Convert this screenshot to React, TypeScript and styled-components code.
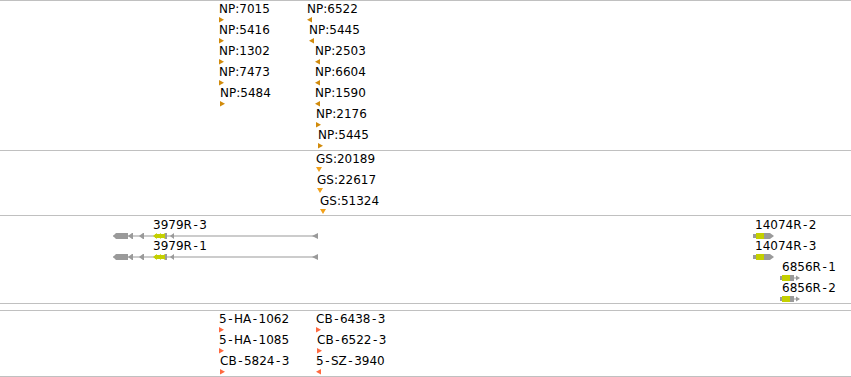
import React from 'react';
import styled, { createGlobalStyle } from 'styled-components';

const GlobalStyle = createGlobalStyle`
    html, body {
        margin: 0;
        padding: 0;
        background: #ffffff;
    }
    body {
        font-family: 'DejaVu Sans', Verdana, sans-serif;
        font-size: 12px;
        color: #000000;
    }
`;

const Browser = styled.div`
    width: 851px;
    display: flex;
    flex-direction: column;
    overflow: hidden;
`;

const Track = styled.div<{ $height: number; $last?: boolean; $pad?: number }>`
    box-sizing: border-box;
    height: ${p => p.$height}px;
    padding-top: ${p => p.$pad ?? 0}px;
    border-top: 1px solid #c0c0c0;
    border-bottom: ${p => (p.$last ? '1px solid #c0c0c0' : 'none')};
    display: flex;
    flex-direction: column;
`;

// one horizontal lane of features; x positions inside come from the data
const Lane = styled.div`
    position: relative;
    height: 21px;
    flex: none;
`;

const FeatureBox = styled.div`
    position: absolute;
    top: 0;
    display: flex;
    flex-direction: column;
    align-items: flex-start;
    gap: 1px;
`;

const Label = styled.span`
    display: block;
    height: 14px;
    line-height: 14px;
    white-space: nowrap;
`;

// the viewer draws its hyphens wider than DejaVu does
const Dash = styled.span`
    padding: 0 1.5px;
`;

const LabelText: React.FC<{ text: string }> = ({ text }) => {
    const parts = text.split('-');
    return (
        <>
            {parts.map((p, i) => (
                <React.Fragment key={i}>
                    {i > 0 && <Dash>-</Dash>}
                    {p}
                </React.Fragment>
            ))}
        </>
    );
};

const Marker = styled.svg`
    display: block;
`;

type Dir = 'right' | 'left' | 'down';

const trianglePoints: Record<Dir, string> = {
    right: '0,0 5,2.75 0,5.5',
    left: '5,0 0,2.75 5,5.5',
    down: '0,0 6,0 3,5',
};

interface FeatureProps {
    label: string;
    x: number;
    row: number;
    dir: Dir;
    color: string;
}

const Feature: React.FC<FeatureProps> = ({ label, x, dir, color }) => (
    <FeatureBox style={{ left: x }}>
        <Label><LabelText text={label} /></Label>
        <Marker width={6} height={6}>
            <polygon points={trianglePoints[dir]} fill={color} />
        </Marker>
    </FeatureBox>
);

const GeneBox = styled.div`
    position: absolute;
    top: 0;
    height: 21px;
    width: 0;
`;

const GeneLabel = styled.span`
    position: absolute;
    top: 0;
    height: 14px;
    line-height: 14px;
    white-space: nowrap;
`;

const GeneGlyph = styled.svg`
    position: absolute;
    top: 15px;
    display: block;
`;

const GRAY = '#9a9a9a';
const CDS = '#c4d000';

// minus-strand transcript with exons and a thin intron line
const LongTranscript: React.FC = () => (
    <GeneGlyph width={206} height={6}>
        <rect x={0} y={2.5} width={205} height={1} fill={GRAY} />
        <polygon points="0,3 3,0 15,0 15,6 3,6" fill={GRAY} />
        <polygon points="15,3 19,0 20,0 20,6 19,6" fill={GRAY} />
        <polygon points="26,3 30,0 31,0 31,6 30,6" fill={GRAY} />
        <polygon points="40,3 44,0 44,6" fill={CDS} />
        <polygon points="44,3 48,0 48,6" fill={CDS} />
        <polygon points="48,3 52,0 52,6" fill={CDS} />
        <rect x={42} y={1} width={10} height={4} fill={CDS} />
        <rect x={52} y={0} width={2} height={6} fill={GRAY} />
        <polygon points="57,3 61,0 61,6" fill={GRAY} />
        <polygon points="199,3 205,0 205,6" fill={GRAY} />
    </GeneGlyph>
);

const ShortTranscript: React.FC<{ small?: boolean }> = ({ small }) => (
    <GeneGlyph width={22} height={6}>
        {small ? (
            <>
                <rect x={0} y={1} width={2} height={4} fill={GRAY} />
                <rect x={2} y={0} width={8} height={6} fill={CDS} />
                <rect x={10} y={0} width={4} height={6} fill={GRAY} />
                <rect x={14} y={2.5} width={2} height={1} fill={GRAY} />
                <polygon points="16,0.5 20,3 16,5.5" fill={GRAY} />
            </>
        ) : (
            <>
                <rect x={0} y={1} width={3} height={4} fill={GRAY} />
                <rect x={3} y={0} width={8} height={6} fill={CDS} />
                <polygon points="11,0 17,0 21,3 17,6 11,6" fill={GRAY} />
            </>
        )}
    </GeneGlyph>
);

const NP = '#d18b0c';
const GS = '#f2a11a';
const RED = '#ff6a40';

const npFeatures: FeatureProps[] = [
    { label: 'NP:7015', x: 219, row: 0, dir: 'right', color: NP },
    { label: 'NP:5416', x: 219, row: 1, dir: 'right', color: NP },
    { label: 'NP:1302', x: 219, row: 2, dir: 'right', color: NP },
    { label: 'NP:7473', x: 219, row: 3, dir: 'right', color: NP },
    { label: 'NP:5484', x: 220, row: 4, dir: 'right', color: NP },
    { label: 'NP:6522', x: 307, row: 0, dir: 'left', color: NP },
    { label: 'NP:5445', x: 309, row: 1, dir: 'left', color: NP },
    { label: 'NP:2503', x: 315, row: 2, dir: 'left', color: NP },
    { label: 'NP:6604', x: 315, row: 3, dir: 'left', color: NP },
    { label: 'NP:1590', x: 315, row: 4, dir: 'left', color: NP },
    { label: 'NP:2176', x: 316, row: 5, dir: 'right', color: NP },
    { label: 'NP:5445', x: 318, row: 6, dir: 'right', color: NP },
];

const gsFeatures: FeatureProps[] = [
    { label: 'GS:20189', x: 316, row: 0, dir: 'down', color: GS },
    { label: 'GS:22617', x: 317, row: 1, dir: 'down', color: GS },
    { label: 'GS:51324', x: 320, row: 2, dir: 'down', color: GS },
];

const strainFeatures: FeatureProps[] = [
    { label: '5-HA-1062', x: 219, row: 0, dir: 'right', color: RED },
    { label: '5-HA-1085', x: 219, row: 1, dir: 'right', color: RED },
    { label: 'CB-5824-3', x: 220, row: 2, dir: 'right', color: RED },
    { label: 'CB-6438-3', x: 316, row: 0, dir: 'right', color: RED },
    { label: 'CB-6522-3', x: 317, row: 1, dir: 'right', color: RED },
    { label: '5-SZ-3940', x: 316, row: 2, dir: 'left', color: RED },
];

type Kind = 'long' | 'short' | 'small';

interface Gene {
    label: string;
    labelX: number;
    glyphX: number;
    row: number;
    kind: Kind;
}

const genes: Gene[] = [
    { label: '3979R-3', labelX: 153, glyphX: 113, row: 0, kind: 'long' },
    { label: '3979R-1', labelX: 153, glyphX: 113, row: 1, kind: 'long' },
    { label: '14074R-2', labelX: 755, glyphX: 753, row: 0, kind: 'short' },
    { label: '14074R-3', labelX: 755, glyphX: 753, row: 1, kind: 'short' },
    { label: '6856R-1', labelX: 782, glyphX: 780, row: 2, kind: 'small' },
    { label: '6856R-2', labelX: 782, glyphX: 780, row: 3, kind: 'small' },
];

function lanes<T extends { row: number }>(items: T[]): T[][] {
    const out: T[][] = [];
    items.forEach(it => {
        while (out.length <= it.row) out.push([]);
        out[it.row].push(it);
    });
    return out;
}

const FeatureTrack: React.FC<{ items: FeatureProps[]; height: number; last?: boolean }> = ({ items, height, last }) => (
    <Track $height={height} $pad={1} $last={last}>
        {lanes(items).map((lane, i) => (
            <Lane key={i}>
                {lane.map((f, j) => <Feature key={j} {...f} />)}
            </Lane>
        ))}
    </Track>
);

const App: React.FC = () => {
    return (
        <Browser>
            <GlobalStyle />
            <FeatureTrack items={npFeatures} height={150} />
            <FeatureTrack items={gsFeatures} height={65} />
            <Track $height={88} $pad={2}>
                {lanes(genes).map((lane, i) => (
                    <Lane key={i}>
                        {lane.map((g, j) => (
                            <GeneBox key={j} style={{ left: g.glyphX }}>
                                <GeneLabel style={{ left: g.labelX - g.glyphX }}>
                                    <LabelText text={g.label} />
                                </GeneLabel>
                                {g.kind === 'long' ? <LongTranscript /> : <ShortTranscript small={g.kind === 'small'} />}
                            </GeneBox>
                        ))}
                    </Lane>
                ))}
            </Track>
            <Track $height={7} />
            <FeatureTrack items={strainFeatures} height={67} last />
        </Browser>
    );
};

export default App;
